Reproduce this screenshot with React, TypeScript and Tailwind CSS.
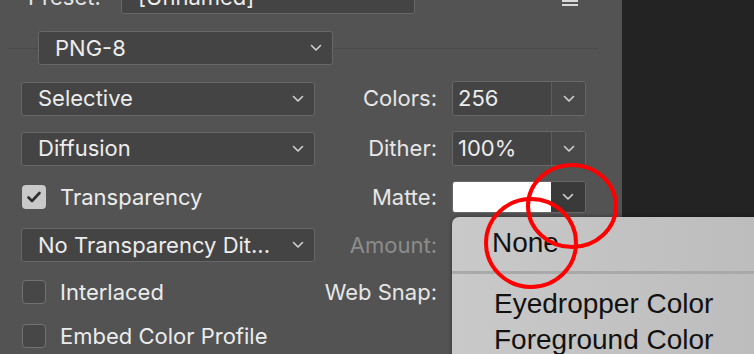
import React from "react";

const Chevron = ({ color = "#d0d0d0" }: { color?: string }) => (
  <svg width="12" height="8" viewBox="0 0 12 8" fill="none">
    <path d="M1.5 1.5 L6 6 L10.5 1.5" stroke={color} strokeWidth="1.6" strokeLinecap="round" strokeLinejoin="round" />
  </svg>
);

const Dropdown = ({ label, className = "" }: { label: string; className?: string }) => (
  <div className={`h-[34px] rounded-[3px] border border-[#676767] bg-[#444444] flex items-center justify-between pl-[16px] pr-[10px] ${className}`}>
    <span className="text-[#ececec] text-[22px] whitespace-nowrap">{label}</span>
    <Chevron />
  </div>
);

const ComboInput = ({ value }: { value?: string }) => (
  <div className="ml-[15px] w-[134px] h-[35px] rounded-[3px] border border-[#676767] bg-[#444444] flex overflow-hidden">
    <div className="w-[98px] h-full flex items-center pl-[5px] text-[#ececec] text-[22px]">{value}</div>
    <div className="flex-1 h-full border-l border-[#5c5c5c] bg-[#494949] flex items-center justify-center">
      <Chevron />
    </div>
  </div>
);

const Label = ({ text, disabled = false }: { text: string; disabled?: boolean }) => (
  <div className={`w-[122px] text-right text-[22px] whitespace-nowrap ${disabled ? "text-[#8c8c8c]" : "text-[#e6e6e6]"}`}>{text}</div>
);

const Checkbox = ({ checked, label }: { checked?: boolean; label: string }) => (
  <div className="flex items-center w-[294px] pl-[1px]">
    {checked ? (
      <div className="w-[24px] h-[24px] rounded-[4px] bg-[#c9c9c9] flex items-center justify-center">
        <svg width="16" height="14" viewBox="0 0 16 14" fill="none">
          <path d="M2.5 7.5 L6 11 L13.5 3" stroke="#2e2e2e" strokeWidth="2.6" strokeLinecap="round" strokeLinejoin="round" />
        </svg>
      </div>
    ) : (
      <div className="w-[24px] h-[24px] rounded-[4px] bg-[#474747] border border-[#727272]" />
    )}
    <span className="ml-[14px] text-[#ececec] text-[22px] whitespace-nowrap">{label}</span>
  </div>
);

export default function App() {
  return (
    <div className="relative w-[754px] h-[354px] flex overflow-hidden" style={{ fontFamily: "Inter, 'Noto Sans', sans-serif" }}>
      <div className="w-[622px] h-[354px] bg-[#535353] overflow-hidden pl-[21px] flex flex-col">
        {/* Preset row */}
        <div className="mt-[-20px] h-[34px] flex items-center">
          <div className="w-[100px] pl-[7px] text-[#e6e6e6] text-[22px]">Preset:</div>
          <div className="w-[294px] h-[34px] rounded-[3px] border border-[#676767] bg-[#444444] flex items-center justify-between pl-[16px] pr-[10px]">
            <span className="text-[#ececec] text-[22px]">[Unnamed]</span>
            <Chevron />
          </div>
          <div className="ml-[140px] mt-[8px] flex items-start">
            <div className="w-[3px] h-[2px] bg-[#d8d8d8] mt-[1px]" />
            <div className="ml-[4px] flex flex-col gap-[2px]">
              <div className="w-[16px] h-[2px] bg-[#d8d8d8]" />
              <div className="w-[16px] h-[2px] bg-[#d8d8d8]" />
              <div className="w-[16px] h-[2px] bg-[#d8d8d8]" />
            </div>
          </div>
        </div>

        {/* PNG-8 row */}
        <div className="mt-[17px] h-[34px] flex items-center ml-[-13px] w-[590px]">
          <div className="w-[30px] h-px bg-[#4a4a4a]" />
          <Dropdown label="PNG-8" className="w-[295px]" />
          <div className="flex-1 h-px bg-[#4a4a4a]" />
        </div>

        {/* Selective / Colors */}
        <div className="mt-[16px] h-[35px] flex items-center">
          <Dropdown label="Selective" className="w-[294px]" />
          <Label text="Colors:" />
          <ComboInput value="256" />
        </div>

        {/* Diffusion / Dither */}
        <div className="mt-[15px] h-[35px] flex items-center">
          <Dropdown label="Diffusion" className="w-[294px]" />
          <Label text="Dither:" />
          <ComboInput value="100%" />
        </div>

        {/* Transparency / Matte */}
        <div className="mt-[15px] h-[32px] flex items-center">
          <Checkbox checked label="Transparency" />
          <Label text="Matte:" />
          <div className="ml-[15px] w-[134px] h-[32px] rounded-[3px] border border-[#676767] bg-[#444444] flex overflow-hidden">
            <div className="w-[98px] h-full bg-white" />
            <div className="flex-1 h-full bg-[#3a3a3a] flex items-center justify-center">
              <Chevron />
            </div>
          </div>
        </div>

        {/* No Transparency / Amount */}
        <div className="mt-[15px] h-[34px] flex items-center">
          <Dropdown label="No Transparency Dit..." className="w-[294px]" />
          <Label text="Amount:" disabled />
        </div>

        {/* Interlaced / Web Snap */}
        <div className="mt-[13px] h-[34px] flex items-center">
          <Checkbox label="Interlaced" />
          <Label text="Web Snap:" />
        </div>

        {/* Embed */}
        <div className="mt-[10px] h-[34px] flex items-center">
          <Checkbox label="Embed Color Profile" />
        </div>
      </div>
      <div className="flex-1 bg-[#232323]" />

      {/* Popup menu */}
      <div
        className="absolute left-[452px] top-[217px] w-[320px] h-[160px] rounded-tl-[7px] bg-gradient-to-r from-[#c9c9c9] to-[#bcbcbc] shadow-[0_0_4px_rgba(0,0,0,0.4)] flex flex-col text-[#111] text-[28px]"
        style={{ fontFamily: "'Liberation Sans', Arial, sans-serif" }}
      >
        <div className="h-[54px] flex items-center pl-[40px] pb-[3px]">None</div>
        <div className="h-[3px] bg-[#a9a9a9]" />
        <div className="pl-[42px] pt-[12px] leading-[36px]">Eyedropper Color</div>
        <div className="pl-[42px] leading-[36px]">Foreground Color</div>
      </div>

      {/* Red annotation circles */}
      <svg className="absolute left-0 top-0 pointer-events-none" width="754" height="354">
        <ellipse cx="572" cy="206" rx="44" ry="41" fill="none" stroke="#ff0000" strokeWidth="4" />
        <ellipse cx="531" cy="243" rx="45" ry="44" fill="none" stroke="#ff0000" strokeWidth="4" />
      </svg>
    </div>
  );
}
